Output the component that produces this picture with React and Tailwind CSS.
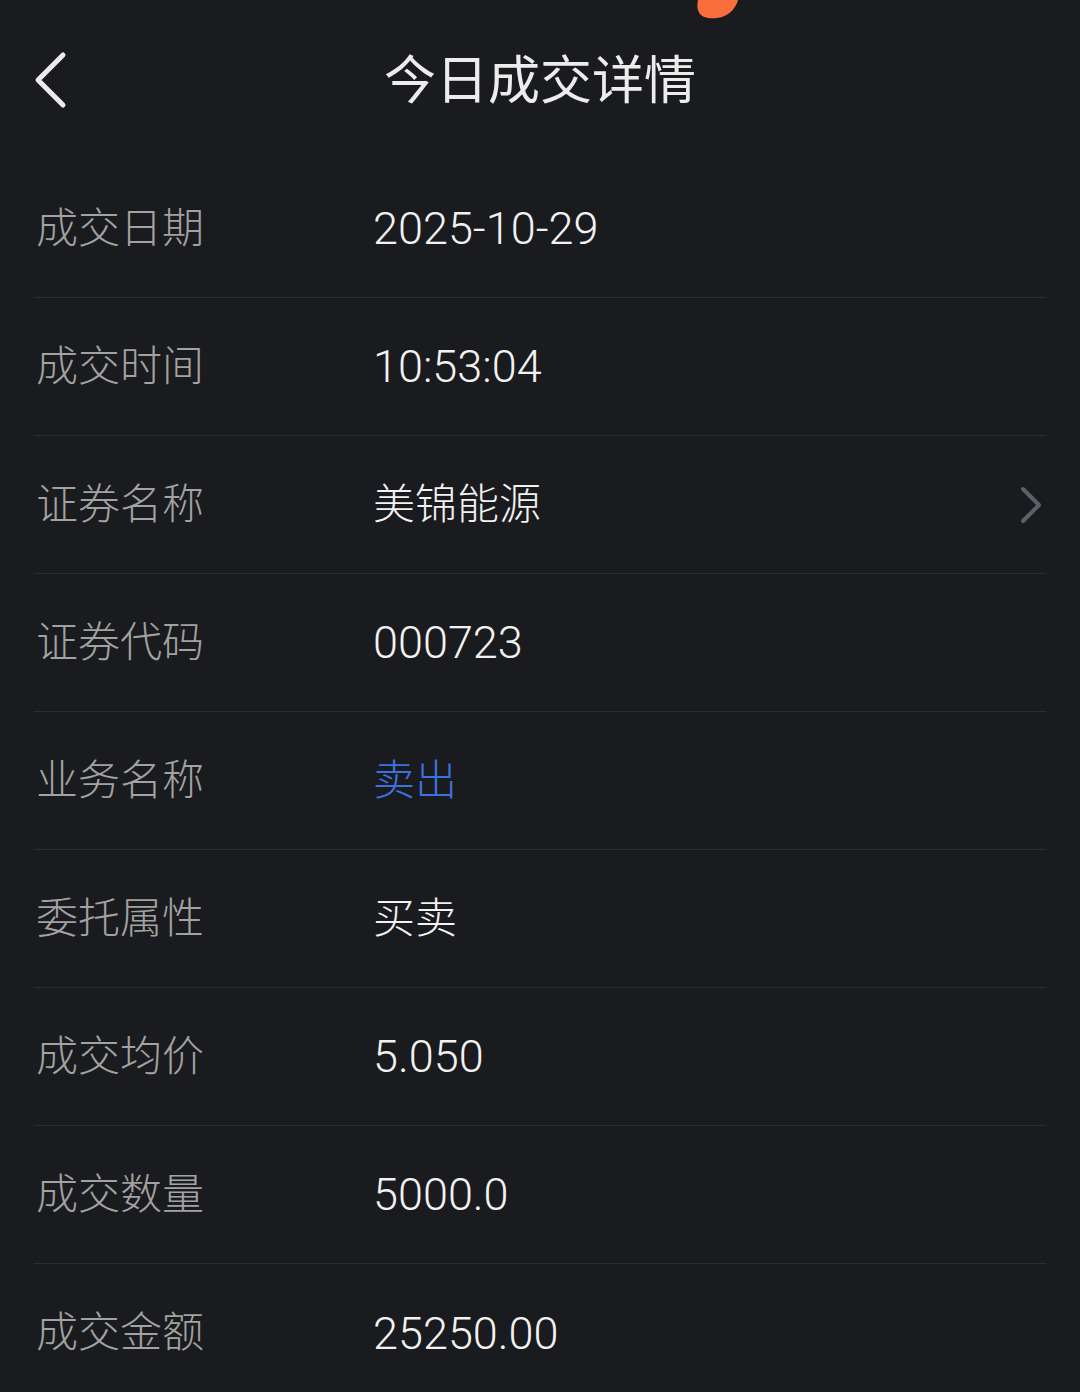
import React from "react";

const rows = [
  { label: "成交日期", value: "2025-10-29", num: true },
  { label: "成交时间", value: "10:53:04", num: true },
  { label: "证券名称", value: "美锦能源", arrow: true },
  { label: "证券代码", value: "000723", num: true },
  { label: "业务名称", value: "卖出", blue: true },
  { label: "委托属性", value: "买卖" },
  { label: "成交均价", value: "5.050", num: true },
  { label: "成交数量", value: "5000.0", num: true },
  { label: "成交金额", value: "25250.00", num: true, last: true },
];

export default function App() {
  return (
    <div
      className="relative w-[1080px] h-[1392px] overflow-hidden bg-[#1a1b1e] font-light"
      style={{ fontFamily: 'Roboto, "Noto Sans CJK SC", sans-serif' }}
    >
      <svg className="absolute left-[690px] top-0" width="56" height="22" viewBox="0 0 56 22">
        <path d="M8 0 L48 0 C46 8 40 14 32 17 C24 19 14 19 10 14 C7 10 7 5 8 0 Z" fill="#fa6e3c" />
      </svg>

      <div className="relative h-[160px] flex items-center justify-center">
        <svg className="absolute left-[30px] top-[50px]" width="44" height="60" viewBox="0 0 44 60">
          <path d="M33 5 L8 30 L33 55" fill="none" stroke="#ececec" strokeWidth="5" strokeLinecap="round" strokeLinejoin="round" />
        </svg>
        <div className="text-[52px] leading-none text-[#ececec] font-normal mt-[3px]">今日成交详情</div>
      </div>

      <div className="flex flex-col">
        {rows.map((r) => (
          <div
            key={r.label}
            className={
              "mx-[34px] h-[138px] flex items-center relative " +
              (r.last ? "" : "border-b border-[#2b2c30]")
            }
          >
            <div className="w-[339px] pl-[2px] text-[42px] leading-none text-[#a2a2a2]">{r.label}</div>
            <div
              className={
                "leading-none " +
                (r.num ? "text-[45px] " : "text-[42px] ") +
                (r.blue ? "text-[#3c72e0]" : "text-[#f2f2f2]")
              }
            >
              {r.value}
            </div>
            {r.arrow && (
              <svg className="absolute right-[2px] top-[47px]" width="30" height="44" viewBox="0 0 30 44">
                <path d="M9 6 L25 22 L9 38" fill="none" stroke="#5e6068" strokeWidth="4" strokeLinecap="round" strokeLinejoin="round" />
              </svg>
            )}
          </div>
        ))}
      </div>
    </div>
  );
}
